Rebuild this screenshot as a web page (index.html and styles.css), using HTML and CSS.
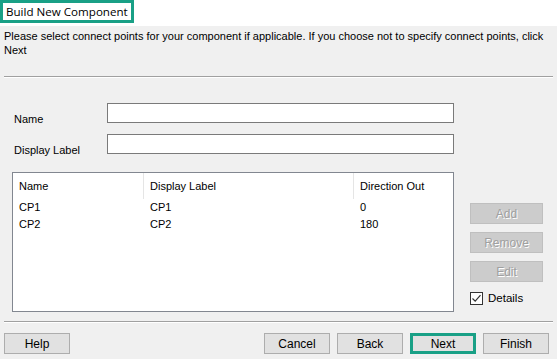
FILE: index.html
```html
<!DOCTYPE html>
<html lang="en">
<head>
    <meta charset="UTF-8">
    <meta name="viewport" content="width=device-width, initial-scale=1.0">
    <title>Build New Component</title>
    <link rel="stylesheet" href="styles.css">
</head>
<body>
    <div class="header">
        <span class="title">Build New Component</span>
    </div>

    <p class="intro">Please select connect points for your component if applicable. If you choose not to specify connect points, click Next</p>
    <div class="separator"></div>

    <div class="form">
        <div class="form-row">
            <label class="form-label">Name</label>
            <input type="text" class="form-input">
        </div>
        <div class="form-row">
            <label class="form-label">Display Label</label>
            <input type="text" class="form-input">
        </div>
    </div>

    <div class="points">
        <div class="list">
            <div class="list-head">
                <div class="col col-name">Name</div>
                <div class="col col-label">Display Label</div>
                <div class="col col-dir">Direction Out</div>
            </div>
            <div class="list-row">
                <div class="col col-name">CP1</div>
                <div class="col col-label">CP1</div>
                <div class="col col-dir">0</div>
            </div>
            <div class="list-row">
                <div class="col col-name">CP2</div>
                <div class="col col-label">CP2</div>
                <div class="col col-dir">180</div>
            </div>
        </div>

        <div class="side">
            <button class="btn btn-disabled" disabled>Add</button>
            <button class="btn btn-disabled" disabled>Remove</button>
            <button class="btn btn-disabled" disabled>Edit</button>
            <label class="details">
                <span class="checkbox">
                    <svg width="11" height="11" viewBox="0 0 11 11"><path d="M1.5 5.5 L4.2 8.2 L9.5 2.2" fill="none" stroke="#333" stroke-width="1.2"/></svg>
                </span>
                Details
            </label>
        </div>
    </div>

    <div class="separator separator-bottom"></div>

    <div class="footer">
        <button class="btn">Help</button>
        <div class="footer-right">
            <button class="btn">Cancel</button>
            <button class="btn">Back</button>
            <button class="btn btn-focus">Next</button>
            <button class="btn">Finish</button>
        </div>
    </div>
</body>
</html>
```

FILE: styles.css
```css
body {
    font-family: "Liberation Sans", Arial, sans-serif;
    font-size: 11px;
    margin: 0;
    width: 557px;
    height: 359px;
    overflow: hidden;
    background-color: #f0f0f0;
    color: #000;
}
.header {
    background-color: #fff;
    height: 26px;
}
.title {
    display: inline-block;
    font-family: "Open Sans", "Noto Sans", sans-serif;
    font-size: 11.6px;
    line-height: 17px;
    padding: 0 3px 0 3px;
    border: 3px solid #19a086;
}
.intro {
    margin: 0;
    padding: 3px 4px 0 4px;
    line-height: 14px;
}
.separator {
    margin: 19px 4px 0 4px;
    height: 1px;
    background-color: #a0a0a0;
    border-bottom: 1px solid #fff;
}
.form {
    display: flex;
    flex-direction: column;
    gap: 11px;
    margin-top: 25px;
}
.form-row {
    display: flex;
    align-items: flex-start;
    height: 20px;
}
.form-label {
    width: 107px;
    padding: 9px 0 0 14px;
    box-sizing: border-box;
    line-height: 14px;
}
.form-input {
    width: 347px;
    height: 20px;
    margin: 0;
    padding: 0 3px;
    box-sizing: border-box;
    border: 1px solid #7a7a7a;
    background-color: #fff;
    font: inherit;
}
.points {
    display: flex;
    margin-top: 18px;
    height: 140px;
}
.list {
    margin-left: 12px;
    width: 442px;
    box-sizing: border-box;
    border: 1px solid #828790;
    background-color: #fff;
}
.list-head {
    display: flex;
    height: 26px;
}
.list-head .col {
    line-height: 27px;
    border-right: 1px solid #e5e5e5;
}
.list-head .col-dir {
    border-right: none;
}
.list-row {
    display: flex;
    line-height: 17px;
}
.col {
    box-sizing: border-box;
    padding-left: 6px;
}
.col-name {
    width: 131px;
}
.col-label {
    width: 210px;
}
.col-dir {
    flex: 1;
}
.side {
    display: flex;
    flex-direction: column;
    gap: 8px;
    margin-left: 16px;
    padding-top: 31px;
}
.btn {
    width: 66px;
    height: 21px;
    margin: 0;
    padding: 0;
    box-sizing: border-box;
    border: 1px solid #adadad;
    background-color: #e1e1e1;
    font: inherit;
    font-size: 12px;
    color: #000;
}
.side .btn {
    width: 73px;
}
.btn-disabled {
    background-color: #cccccc;
    border-color: #bfbfbf;
    color: #a0a0a0;
    text-shadow: 1px 1px 0 #fff;
}
.btn-focus {
    border: 3px solid #19a086;
}
.details {
    display: flex;
    align-items: center;
    gap: 5px;
    margin-top: 1px;
    line-height: 14px;
    font-size: 11.5px;
}
.checkbox {
    display: flex;
    align-items: center;
    justify-content: center;
    width: 13px;
    height: 13px;
    box-sizing: border-box;
    border: 1px solid #333;
    background-color: #fff;
}
.separator-bottom {
    margin-top: 9px;
}
.footer {
    display: flex;
    justify-content: space-between;
    margin: 10px 8px 0 4px;
}
.footer-right {
    display: flex;
    gap: 7px;
}
```
